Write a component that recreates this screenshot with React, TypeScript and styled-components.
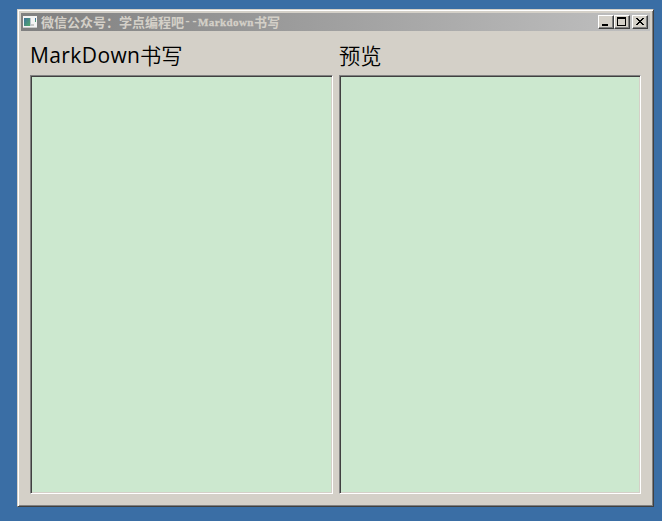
import React from 'react';
import styled, { createGlobalStyle } from 'styled-components';

const GlobalStyle = createGlobalStyle`
  * { box-sizing: border-box; }
  body { margin: 0; background: #3a6ea5; overflow: hidden; }
`;

const Desktop = styled.main`
  width: 662px;
  height: 521px;
  padding: 9px 8px 14px 17px;
  background: #3a6ea5;
`;

const Window = styled.section`
  height: 498px;
  padding: 2px;
  background: #d4d0c8;
  border: 1px solid;
  border-color: #d4d0c8 #404040 #404040 #d4d0c8;
  box-shadow: inset 1px 1px #fff, inset -1px -1px #808080;
`;

const TitleBar = styled.header`
  display: flex;
  align-items: center;
  height: 18px;
  margin: 1px;
  padding: 0 2px;
  background: linear-gradient(90deg, #808080, #c0c0c0);
`;

const Title = styled.h1`
  display: flex;
  flex: 1;
  height: 18px;
  margin: 0 0 0 4px;
  color: #d4d0c8;
  font: 700 13px/17px "Noto Sans CJK SC", sans-serif;
  white-space: pre;
`;

const Dashes = styled.span`
  width: 14px;
  font: 700 11.67px/17px "Liberation Mono", monospace;
`;

const TitleLatin = styled.span`
  width: 56px;
  font: 700 11px/18px "Liberation Serif", serif;
  letter-spacing: 0.4px;
  -webkit-text-stroke: 0.3px #d4d0c8;
`;

const Buttons = styled.div`
  display: flex;
`;

const WindowButton = styled.button<{ $gap?: boolean }>`
  display: block;
  width: 16px;
  height: 14px;
  margin: 0 0 0 ${({ $gap }) => ($gap ? 2 : 0)}px;
  padding: 0;
  background: #d4d0c8;
  border: 1px solid;
  border-color: #fff #404040 #404040 #fff;
  box-shadow: inset -1px -1px #808080;

  svg { display: block; }
`;

const Columns = styled.div`
  display: grid;
  grid-template-columns: 303px 302px;
  column-gap: 6px;
  padding: 9px 0 0 10px;
`;

const Column = styled.div`
  display: flex;
  flex-direction: column;
`;

const Label = styled.label`
  display: flex;
  height: 34px;
  color: #000;
  font: 350 21.3px/28px "Noto Sans CJK SC", sans-serif;
  white-space: pre;
`;

const LabelLatin = styled.span`
  width: 110px;
  font: 400 21px/28px "Open Sans", sans-serif;
  letter-spacing: 0.4px;
`;

const TextPane = styled.div`
  height: 419px;
  background: #cce8cf;
  border: 1px solid;
  border-color: #808080 #fff #fff #808080;
  box-shadow: inset 1px 1px #404040, inset -1px -1px #d4d0c8;
`;

const AppIcon = () => (
  <svg width="14" height="12" viewBox="0 0 14 12" shapeRendering="crispEdges">
    <defs>
      <linearGradient id="screen" x1="0" y1="0" x2="1" y2="1">
        <stop offset="0" stopColor="#3f719c" />
        <stop offset="1" stopColor="#4fa86a" />
      </linearGradient>
    </defs>
    <path fill="#f4f4f4" d="M0 0h14v12H0z" />
    <path fill="url(#screen)" d="M1 2h6v8H1z" />
    <path fill="#b8c4cc" d="M7 2h1v8H7z" />
    <path fill="#3f719c" d="M12 2h1v2h-1z" />
    <path fill="#4f9a78" d="M12 4h1v2h-1z" />
    <path fill="#c8c8c8" d="M0 11h14v1H0zM8 8h3v2H8z" />
  </svg>
);

const paths = {
  Minimize: 'M3 8h6v2H3z',
  Maximize: 'M2 1h9v9H2zM3 3v6h7V3z',
  Close: 'M3 2h2v1h1v1h2V3h1V2h2v1h-1v1H9v1H8v1h1v1h1v1h1v1H9V8H8V7H6v1H5v1H3V8h1V7h1V6h1V5H5V4H4V3H3z',
};

const ControlIcon = ({ kind }: { kind: keyof typeof paths }) => (
  <svg width="14" height="12" viewBox="0 0 14 12" shapeRendering="crispEdges">
    <path fill="#000" fillRule="evenodd" d={paths[kind]} />
  </svg>
);

export default function App() {
  return (
    <>
      <GlobalStyle />
      <Desktop>
        <Window>
          <TitleBar>
            <AppIcon />
            <Title>
              微信公众号：学点编程吧<Dashes>--</Dashes><TitleLatin>Markdown</TitleLatin>书写
            </Title>
            <Buttons>
              <WindowButton aria-label="Minimize"><ControlIcon kind="Minimize" /></WindowButton>
              <WindowButton aria-label="Maximize"><ControlIcon kind="Maximize" /></WindowButton>
              <WindowButton aria-label="Close" $gap><ControlIcon kind="Close" /></WindowButton>
            </Buttons>
          </TitleBar>
          <Columns>
            <Column>
              <Label><LabelLatin>MarkDown</LabelLatin>书写</Label>
              <TextPane role="textbox" />
            </Column>
            <Column>
              <Label>预览</Label>
              <TextPane role="document" />
            </Column>
          </Columns>
        </Window>
      </Desktop>
    </>
  );
}
